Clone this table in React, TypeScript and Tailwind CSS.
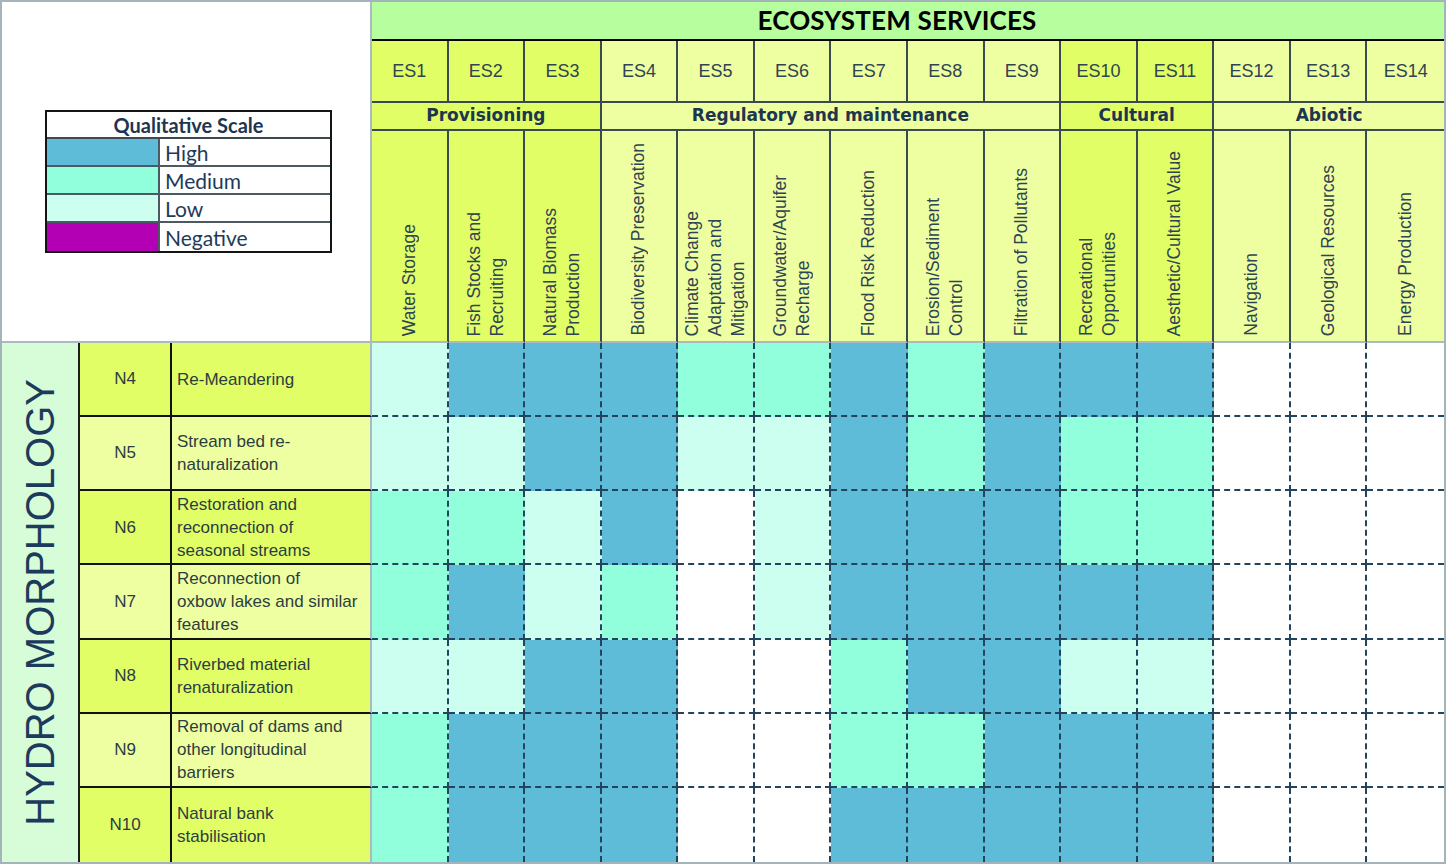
const arial = "font-['Liberation_Sans',Arial,sans-serif]";
const verdana = "font-['DejaVu_Sans',Verdana,sans-serif]";
const calibri = "font-['Lato','Open_Sans',sans-serif]";

const DARK = "bg-[#e1fe66]";
const LIGHT = "bg-[#eeffa1]";

const fill: Record<string, string> = {
  h: "bg-[#5fbcd9]",
  m: "bg-[#92ffdc]",
  l: "bg-[#ccfff0]",
  "-": "bg-white",
};

const services = [
  { es: "ES1", dark: true, label: ["Water Storage"] },
  { es: "ES2", dark: true, label: ["Fish Stocks and", "Recruiting"] },
  { es: "ES3", dark: true, label: ["Natural Biomass", "Production"] },
  { es: "ES4", dark: false, label: ["Biodiversity Preservation"] },
  { es: "ES5", dark: false, label: ["Climate Change", "Adaptation and", "Mitigation"] },
  { es: "ES6", dark: false, label: ["Groundwater/Aquifer", "Recharge"] },
  { es: "ES7", dark: false, label: ["Flood Risk Reduction"] },
  { es: "ES8", dark: false, label: ["Erosion/Sediment", "Control"] },
  { es: "ES9", dark: false, label: ["Filtration of Pollutants"] },
  { es: "ES10", dark: true, label: ["Recreational", "Opportunities"] },
  { es: "ES11", dark: true, label: ["Aesthetic/Cultural Value"] },
  { es: "ES12", dark: false, label: ["Navigation"] },
  { es: "ES13", dark: false, label: ["Geological Resources"] },
  { es: "ES14", dark: false, label: ["Energy Production"] },
];

const groups = [
  { name: "Provisioning", span: "col-span-3", dark: true },
  { name: "Regulatory and maintenance", span: "col-span-6", dark: false },
  { name: "Cultural", span: "col-span-2", dark: true },
  { name: "Abiotic", span: "col-span-3", dark: false },
];

const measures = [
  { id: "N4", name: ["Re-Meandering"], cells: "lhhhmmhmhhh---" },
  { id: "N5", name: ["Stream bed re-", "naturalization"], cells: "llhhllhmhmm---" },
  { id: "N6", name: ["Restoration and", "reconnection of", "seasonal streams"], cells: "mmlh-lhhhmm---" },
  { id: "N7", name: ["Reconnection of", "oxbow lakes and similar", "features"], cells: "mhlm-lhhhhh---" },
  { id: "N8", name: ["Riverbed material", "renaturalization"], cells: "llhh--mhhll---" },
  { id: "N9", name: ["Removal of dams and", "other longitudinal", "barriers"], cells: "mhhh--mmhhh---" },
  { id: "N10", name: ["Natural bank", "stabilisation"], cells: "mhhh--hhhhh---" },
];

const legend = [
  { label: "High", color: "bg-[#5fbcd9]" },
  { label: "Medium", color: "bg-[#92ffdc]" },
  { label: "Low", color: "bg-[#ccfff0]" },
  { label: "Negative", color: "bg-[#b400b4]" },
];

function Legend() {
  return (
    <div className={`w-[287px] border-2 border-[#151515] bg-white ${calibri}`}>
      <div className="flex h-[27px] items-center justify-center border-b-2 border-[#3c4a50] text-[20px] font-bold text-[#1e3550]">
        Qualitative Scale
      </div>
      {legend.map((item, i) => (
        <div
          key={item.label}
          className={`flex h-[28px] ${i < legend.length - 1 ? "border-b-2 border-[#4a5a60]" : ""}`}
        >
          <div className={`w-[113px] border-r-2 border-[#4a5a60] ${item.color}`} />
          <div className="flex items-center pl-[5px] text-[21px] leading-none text-[#1e3a5a]">{item.label}</div>
        </div>
      ))}
    </div>
  );
}

export default function App() {
  return (
    <div className="h-[864px] w-[1446px] overflow-hidden bg-white">
      <div className="grid h-[864px] w-[1446px] grid-cols-[78px_92px_200px_repeat(14,minmax(0,1fr))] grid-rows-[39px_62px_28px_212px_repeat(7,minmax(0,1fr))] border-2 border-[#a3b5ba]">
        {/* Legend panel */}
        <div className="col-span-3 row-span-4 border-r-2 border-b-2 border-[#a9bbc0] bg-white pl-[43px] pt-[108px]">
          <Legend />
        </div>

        {/* Title */}
        <div className="col-span-14 flex items-center justify-center border-b-2 border-black bg-[#b7fe9e] pr-[22px]">
          <span className={`${calibri} text-[26px] font-bold tracking-[0.2px] text-black`}>ECOSYSTEM SERVICES</span>
        </div>

        {/* ES codes */}
        {services.map((s, i) => (
          <div
            key={s.es}
            className={`flex items-center justify-center border-b-2 border-[#3a4a52] ${
              i < services.length - 1 ? "border-r-2" : ""
            } ${s.dark ? DARK : LIGHT} ${arial} text-[18px] text-[#2f4452]`}
          >
            {s.es}
          </div>
        ))}

        {/* Groups */}
        {groups.map((g, i) => (
          <div
            key={g.name}
            className={`${g.span} flex items-center justify-center border-b-2 border-[#3a4a52] ${
              i < groups.length - 1 ? "border-r-2" : ""
            } ${g.dark ? DARK : LIGHT} ${verdana} text-[17px] font-bold text-[#1e3550]`}
          >
            {g.name}
          </div>
        ))}

        {/* Rotated service names */}
        {services.map((s, i) => (
          <div
            key={s.es + "-label"}
            className={`flex items-end justify-center border-b-2 border-b-[#a9bbc0] border-r-[#3a4a52] pb-[5px] ${
              i < services.length - 1 ? "border-r-2" : ""
            } ${s.dark ? DARK : LIGHT}`}
          >
            <div className={`rotate-180 text-left [writing-mode:vertical-rl] ${arial} text-[17.5px] leading-[23px] text-[#2f4452]`}>
              {s.label.map((line, k) => (
                <span key={k}>
                  {line}
                  {k < s.label.length - 1 && <br />}
                </span>
              ))}
            </div>
          </div>
        ))}

        {/* Hydro morphology */}
        <div className="row-span-7 flex items-center justify-center border-r-2 border-[#1c1c1c] bg-[#d7fcd8]">
          <div className={`rotate-180 whitespace-nowrap [writing-mode:vertical-rl] ${arial} text-[40px] font-normal leading-none text-[#1c3a5c]`}>
            HYDRO MORPHOLOGY
          </div>
        </div>

        {measures.map((m, r) => {
          const last = r === measures.length - 1;
          const bg = r % 2 === 0 ? DARK : LIGHT;
          return (
            <div key={m.id} className="contents">
              <div
                className={`flex items-center justify-center border-r-2 border-[#111] ${
                  last ? "" : "border-b-2"
                } ${bg} ${arial} text-[17px] text-[#2b3d40]`}
              >
                {m.id}
              </div>
              <div
                className={`flex items-center border-r-2 border-r-[#a9bbc0] border-b-[#111] pl-[5px] ${
                  last ? "" : "border-b-2"
                } ${bg} ${arial} text-[17px] leading-[23px] text-[#2b3d40]`}
              >
                <div>
                  {m.name.map((line, k) => (
                    <div key={k} className="whitespace-nowrap">
                      {line}
                    </div>
                  ))}
                </div>
              </div>
              {m.cells.split("").map((c, k) => (
                <div
                  key={k}
                  className={`border-dashed border-[#23445d] ${k < 13 ? "border-r-2" : ""} ${
                    last ? "" : "border-b-2"
                  } ${fill[c]}`}
                />
              ))}
            </div>
          );
        })}
      </div>
    </div>
  );
}
